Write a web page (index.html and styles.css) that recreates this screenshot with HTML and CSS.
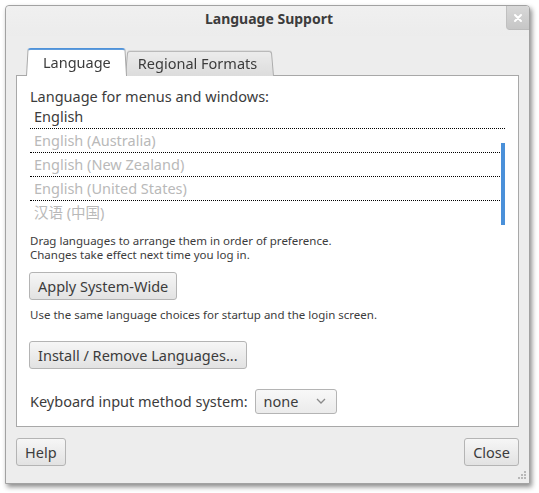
FILE: index.html
```html
<!DOCTYPE html>
<html>
<head>
<meta charset="utf-8">
<link rel="stylesheet" href="styles.css">
</head>
<body>
<div class="window">
  <div class="titlebar">
    <div></div>
    <div class="title">Language Support</div>
    <div class="tb-right"><div class="close-x">
      <svg width="10" height="10" viewBox="0 0 10 10"><path d="M2 2 L8 8 M8 2 L2 8" stroke="#fff" stroke-width="2" stroke-linecap="round"/></svg>
    </div></div>
  </div>
  <div class="body">
    <div class="tabs">
      <div class="tab active">Language</div>
      <div class="tab">Regional Formats</div>
    </div>
    <div class="panel">
      <div class="label">Language for menus and windows:</div>
      <div class="list">
        <div class="row first">English</div>
        <div class="scroll">
          <div class="rows">
            <div class="row dis">English (Australia)</div>
            <div class="row dis">English (New Zealand)</div>
            <div class="row dis">English (United States)</div>
            <div class="row dis last">汉语 (中国)</div>
          </div>
          <div class="scrollbar"></div>
        </div>
      </div>
      <div class="note">
        <div>Drag languages to arrange them in order of preference.</div>
        <div>Changes take effect next time you log in.</div>
      </div>
      <div class="btnrow"><button class="btn">Apply System-Wide</button></div>
      <div class="note2">Use the same language choices for startup and the login screen.</div>
      <div class="btnrow2"><button class="btn">Install / Remove Languages...</button></div>
      <div class="kbd">
        <span>Keyboard input method system:</span>
        <div class="combo"><span>none</span>
          <svg width="10" height="6" viewBox="0 0 10 6"><path d="M1 1 L5 5 L9 1" fill="none" stroke="#8a8a8a" stroke-width="1.3"/></svg>
        </div>
      </div>
    </div>
    <div class="footer">
      <button class="btn fbtn">Help</button>
      <button class="btn fbtn">Close</button>
    </div>
  </div>
  <div class="grip">
    <svg width="9" height="9" viewBox="0 0 9 9" fill="#b8b8b8">
      <rect x="7" y="1" width="2" height="2"/>
      <rect x="4" y="4" width="2" height="2"/><rect x="7" y="4" width="2" height="2"/>
      <rect x="1" y="7" width="2" height="2"/><rect x="4" y="7" width="2" height="2"/><rect x="7" y="7" width="2" height="2"/>
    </svg>
  </div>
</div>
</body>
</html>
```
FILE: styles.css
```css
html, body {
  margin: 0;
  padding: 0;
  background: #ffffff;
}
body {
  font-family: "Noto Sans", "Open Sans", "Noto Sans CJK SC", sans-serif;
  color: #3c3c3c;
  width: 539px;
  height: 493px;
  overflow: hidden;
}
.window {
  position: relative;
  margin: 5px 0 0 5px;
  width: 525px;
  height: 479px;
  box-sizing: border-box;
  border: 1px solid #a2a2a2;
  border-radius: 4px 4px 0 0;
  background: #ededed;
  box-shadow: 2px 3px 5px rgba(0, 0, 0, 0.45);
  display: flex;
  flex-direction: column;
}
.titlebar {
  height: 30px;
  display: grid;
  grid-template-columns: 1fr auto 1fr;
  align-items: start;
  background: linear-gradient(#f0f0f0, #ececec);
  border-radius: 4px 4px 0 0;
}
.title {
  font-weight: bold;
  font-size: 14px;
  line-height: 16px;
  padding-top: 5px;
  padding-left: 3px;
  color: #3c3c3c;
}
.tb-right {
  display: flex;
  justify-content: flex-end;
}
.close-x {
  width: 23px;
  height: 24px;
  background: linear-gradient(#d8d8d8, #c6c6c6);
  border-left: 1px solid #c0c0c0;
  border-bottom: 1px solid #bcbcbc;
  border-radius: 0 3px 0 4px;
  display: flex;
  align-items: center;
  justify-content: center;
  box-sizing: border-box;
}
.body {
  flex: 1;
  padding: 11px 10px 0 10px;
  display: flex;
  flex-direction: column;
}
.tabs {
  display: flex;
  padding-left: 10px;
  height: 29px;
  align-items: flex-end;
  margin-bottom: -1px;
  position: relative;
  z-index: 1;
}
.tab {
  position: relative;
  font-size: 14.5px;
  line-height: 18px;
  height: 26px;
  padding: 0 17px 0 13px;
  display: flex;
  align-items: center;
  color: #3c3c3c;
  box-sizing: border-box;
}
.tab::before {
  content: "";
  position: absolute;
  inset: 0;
  z-index: -1;
  border: 1px solid #acacac;
  border-bottom: none;
  border-radius: 3px 3px 0 0;
  background: linear-gradient(#ececec, #dcdcdc);
  transform: perspective(60px) rotateX(4deg);
  transform-origin: bottom;
}
.tab.active {
  height: 29px;
  padding: 1px 16px 0 17px;
  margin-right: -2px;
  z-index: 2;
}
.tab.active::before {
  background: #ffffff;
  border-color: #a8a8a8;
  border-top: 2px solid #4f92d9;
}
.panel {
  height: 352px;
  box-sizing: border-box;
  border: 1px solid #a8a8a8;
  background: #ffffff;
  padding: 11px 13px 0 13px;
  display: flex;
  flex-direction: column;
}
.label {
  font-size: 14.5px;
  line-height: 18px;
}
.list {
  display: flex;
  flex-direction: column;
}
.row {
  height: 24px;
  box-sizing: border-box;
  border-bottom: 1px dotted #000;
  font-size: 14.5px;
  line-height: 22px;
  padding-left: 4px;
}
.row.dis {
  color: #b9b9b9;
}
.row.last {
  border-bottom: none;
}
.scroll {
  display: flex;
}
.rows {
  flex: 1;
  display: flex;
  flex-direction: column;
}
.scrollbar {
  width: 4px;
  margin-left: 1px;
  margin-top: 14px;
  background: #4a90d9;
}
.note {
  font-size: 11.5px;
  line-height: 13.5px;
  margin-top: 9px;
}
.btnrow {
  margin-top: 11px;
}
.btn {
  font-family: inherit;
  font-size: 14.5px;
  color: #3c3c3c;
  height: 28px;
  box-sizing: border-box;
  border: 1px solid #b4b4b4;
  border-radius: 3px;
  background: linear-gradient(#f6f6f6, #e2e2e2);
  padding: 0 8px;
  margin: 0 0 0 -1px;
  line-height: 18px;
}
.note2 {
  font-size: 11.5px;
  line-height: 13.5px;
  margin-top: 8px;
}
.btnrow2 {
  margin-top: 19px;
}
.kbd {
  margin-top: 20px;
  display: flex;
  align-items: center;
  gap: 7px;
  font-size: 14.5px;
}
.combo {
  width: 82px;
  height: 25px;
  box-sizing: border-box;
  border: 1px solid #b4b4b4;
  border-radius: 3px;
  background: linear-gradient(#f8f8f8, #ebebeb);
  display: flex;
  align-items: center;
  justify-content: space-between;
  padding: 0 10px 0 8px;
}
.footer {
  display: flex;
  justify-content: space-between;
  margin-top: 11px;
}
.fbtn {
  margin: 0;
  padding: 0 8px;
}
.grip {
  position: absolute;
  right: 3px;
  bottom: 4px;
  line-height: 0;
}
```
